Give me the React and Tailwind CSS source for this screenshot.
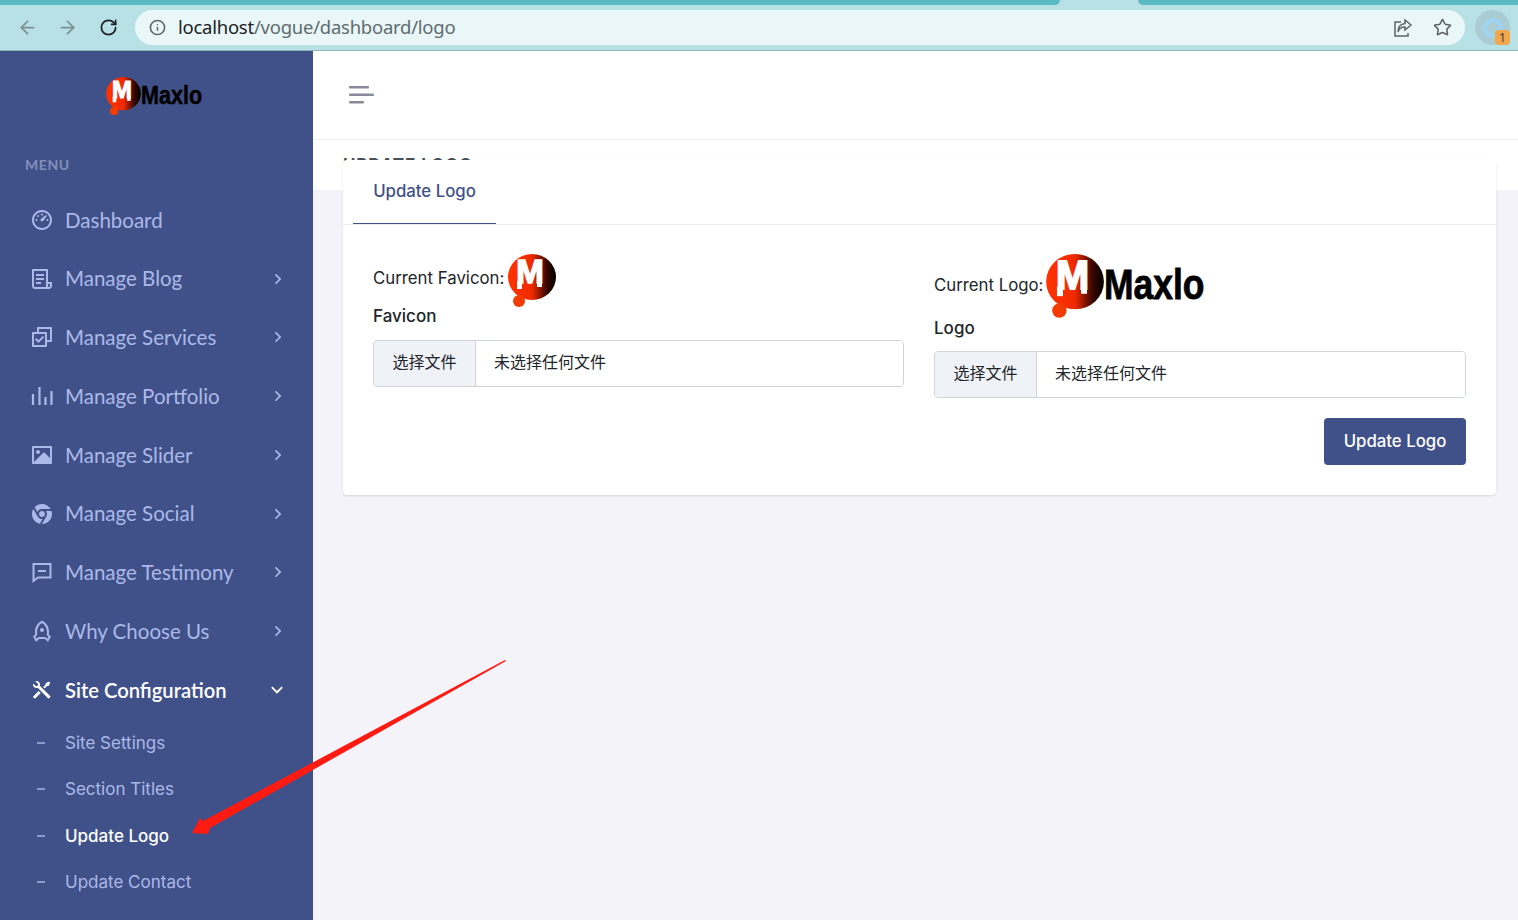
import { useId } from 'react';
import { ArrowLeft, ArrowRight, RotateCw, Info, Star } from 'lucide-react';
import {
  RiDashboard3Line,
  RiFileList3Line,
  RiCheckboxMultipleLine,
  RiImageFill,
  RiChromeFill,
  RiRocketLine,
  RiToolsFill,
  RiArrowRightSLine,
  RiArrowDownSLine,
} from 'react-icons/ri';

const BarsIcon = ({ className }) => (
  <svg viewBox="0 0 24 24" className={className} fill="none" stroke="currentColor" strokeWidth="2.2">
    <path d="M3 21V10M9.500 21V3M15.500 21V13M21.500 21V7" />
  </svg>
);

const BubbleIcon = ({ className }) => (
  <svg viewBox="0 0 24 24" className={className} fill="none" stroke="currentColor" strokeWidth="2">
    <path d="M3.500 4h17v13.500H8L3.500 21z" />
    <path d="M8 11h8" />
  </svg>
);

const menuItems = [
  { label: 'Dashboard', icon: RiDashboard3Line },
  { label: 'Manage Blog', icon: RiFileList3Line, arrow: true },
  { label: 'Manage Services', icon: RiCheckboxMultipleLine, arrow: true },
  { label: 'Manage Portfolio', icon: BarsIcon, arrow: true },
  { label: 'Manage Slider', icon: RiImageFill, arrow: true },
  { label: 'Manage Social', icon: RiChromeFill, arrow: true },
  { label: 'Manage Testimony', icon: BubbleIcon, arrow: true },
  { label: 'Why Choose Us', icon: RiRocketLine, arrow: true },
];

const subItems = ['Site Settings', 'Section Titles', 'Update Logo', 'Update Contact'];

const LogoMark = ({ className }) => {
  const id = useId();
  return (
    <svg viewBox="0 0 48 54" className={className}>
      <defs>
        <linearGradient id={id} x1="0" x2="1" y1="0" y2="0">
          <stop offset="0" stopColor="#ff3300" />
          <stop offset="0.5" stopColor="#f02a00" />
          <stop offset="0.8" stopColor="#3a0800" />
          <stop offset="1" stopColor="#000000" />
        </linearGradient>
      </defs>
      <ellipse cx="24" cy="23" rx="24" ry="23" fill={`url(#${id})`} />
      <circle cx="11" cy="47" r="6" fill="#f23c00" />
      <text x="22" y="29" textAnchor="middle" fontFamily="'Liberation Sans', sans-serif" fontWeight="700" fontSize="33" fill="#fff" stroke="#fff" strokeWidth="1.5">
        M
      </text>
      <rect x="9" y="27" width="5" height="8" fill="#fff" />
      <rect x="29" y="27" width="5" height="6" fill="#fff" />
    </svg>
  );
};

const BrowserBar = () => (
  <div className="shrink-0 h-[51px] bg-[#b7e1e5] border-b border-[#8fb5ba] flex flex-col">
    <div className="h-[5px] flex justify-between">
      <div className="w-[1060px] bg-[#5bb9c3] rounded-br-lg" />
      <div className="w-[380px] bg-[#5bb9c3] rounded-bl-lg" />
    </div>
    <div className="flex items-center mt-[5px] h-[35px]">
      <div className="w-[135px] flex items-center pl-[17px]">
        <ArrowLeft className="w-[21px] h-[21px] text-[#7d9094]" strokeWidth={2} />
        <ArrowRight className="w-[21px] h-[21px] ml-[19px] text-[#7d9094]" strokeWidth={2} />
        <RotateCw className="w-[19px] h-[19px] ml-[21px] text-[#202124]" strokeWidth={2.2} />
      </div>
      <div className="w-[1330px] h-[35px] rounded-full bg-[#e9f7f8] flex items-center pl-[14px] pr-[13px]">
        <Info className="w-[17px] h-[17px] text-[#5f6368]" strokeWidth={2.2} />
        <span className="ml-[12px] pb-[2px] text-[18.500px] font-['Noto_Sans',sans-serif] text-[#616b6e] tracking-[-0.25px]">
          <span className="text-[#202124]">localhost</span>/vogue/dashboard/logo
        </span>
        <div className="ml-auto flex items-center gap-[20px]">
          <svg viewBox="0 0 20 20" className="w-[20px] h-[20px] text-[#5f6368]" fill="none" stroke="currentColor" strokeWidth="1.5">
            <path d="M8 4H2v14h13v-3" />
            <path d="M12 2l6 5-6 5V9C8 9 6 10 5 14c0-5 3-8 7-8.500z" />
          </svg>
          <Star className="w-[19px] h-[19px] text-[#5f6368]" strokeWidth={2} />
        </div>
      </div>
      <div className="ml-[10px] relative w-[35px] h-[35px] rounded-full bg-[#a9cdd2] flex items-center justify-center">
        <div className="w-[20px] h-[20px] rounded-full border-[4px] border-[#9fd4f5]" />
        <div className="absolute right-0 bottom-0 w-[15px] h-[15px] bg-[#f2a74b] rounded-sm text-[12px] leading-[15px] text-center text-[#3b3b3b] font-['Noto_Sans',sans-serif]">
          1
        </div>
      </div>
    </div>
  </div>
);

const Sidebar = () => (
  <aside className="shrink-0 w-[313px] bg-[#405189] overflow-hidden">
    <div className="h-[88px] flex items-start pl-[106px] pt-[26px]">
      <LogoMark className="w-[35px] h-[39px]" />
      <span className="inline-block origin-left scale-x-[0.83] font-['Liberation_Sans',sans-serif] font-bold text-[26px] leading-[36px] text-black [-webkit-text-stroke:0.5px_black]">
        Maxlo
      </span>
    </div>
    <div className="pl-[25px] mt-[16px] h-[20px] text-[14px] leading-[20px] font-bold text-[#838fb9] font-['Lato',sans-serif] tracking-[0.6px]">
      MENU
    </div>
    <nav className="mt-[15.500px] font-['Lato',sans-serif]">
      {menuItems.map(({ label, icon: Icon, arrow }) => (
        <div key={label} className="h-[58.75px] flex items-center pl-[29.500px] pr-[25px] text-[#abb9e8] text-[20.500px]">
          <Icon className="w-[24px] h-[24px] shrink-0" />
          <span className="ml-[11.500px]">{label}</span>
          {arrow && <RiArrowRightSLine className="ml-auto w-[20px] h-[20px]" />}
        </div>
      ))}
      <div className="h-[58.75px] flex items-center pl-[29.500px] pr-[25px] text-white text-[20.200px] font-semibold">
        <RiToolsFill className="w-[24px] h-[24px] shrink-0" />
        <span className="ml-[11.500px]">Site Configuration</span>
        <RiArrowDownSLine className="ml-auto w-[22px] h-[22px]" />
      </div>
    </nav>
    <div className="mt-[1.500px] font-['Inter',sans-serif] text-[17px]">
      {subItems.map((item) => (
        <div key={item} className={`h-[46.33px] flex items-center pl-[37px] ${item === 'Update Logo' ? 'text-white font-medium' : 'text-[#abb9e8]'}`}>
          <span className="w-[8px] h-[2px] -mt-[2px] bg-[#8c9ac9]" />
          <span className="ml-[20px]">{item}</span>
        </div>
      ))}
    </div>
  </aside>
);

const FileField = () => (
  <div className="h-[47px] flex border border-[#ced4da] rounded-[4px] overflow-hidden text-[16px] text-[#212529] font-['Noto_Sans_CJK_SC',sans-serif]">
    <div className="w-[102px] pb-[5px] bg-[#eff2f7] border-r border-[#ced4da] flex items-center justify-center">选择文件</div>
    <div className="flex-1 pb-[5px] bg-white flex items-center pl-[18px]">未选择任何文件</div>
  </div>
);

export default function App() {
  return (
    <div className="relative h-[920px] w-full overflow-hidden flex flex-col font-['Inter',sans-serif] bg-[#f3f3f9]">
      <BrowserBar />
      <div className="flex-1 flex min-h-0">
        <Sidebar />
        <main className="flex-1 min-w-0">
          <header className="h-[89px] bg-white border-b border-[#f0f0f5] flex items-center pl-[36px]">
            <svg viewBox="0 0 25 18" className="w-[25px] h-[18px]">
              <rect x="0" y="0" width="20" height="2.500" rx="1" fill="#878a99" />
              <rect x="0" y="7.500" width="25" height="2.500" rx="1" fill="#878a99" />
              <rect x="0" y="15" width="15" height="2.500" rx="1" fill="#878a99" />
            </svg>
          </header>
          <div className="h-[50px] bg-white pl-[30px] pt-[13px] text-[17px] leading-[24px] font-bold text-[#495057] tracking-[0.9px]">
            UPDATE LOGO
          </div>
          <section className="relative -mt-[30px] ml-[30px] mr-[22px] bg-white rounded-[4px] shadow-[0_1px_2px_rgba(56,65,74,0.15)]">
            <div className="h-[65px] border-b border-[#e9ebec] pl-[10px]">
              <div className="w-[143px] h-[64px] border-b border-[#405189] flex items-center justify-center text-[#405189] text-[16.800px] font-medium">
                Update Logo
              </div>
            </div>
            <div className="px-[30px] pt-[29px] pb-[30px]">
              <div className="grid grid-cols-[531px_532px] gap-x-[30px]">
                <div>
                  <div className="h-[52px] flex items-start text-[16.800px] text-[#212529]">
                    <span className="mt-[12px] mr-[4px]">Current Favicon:</span>
                    <LogoMark className="w-[48px] h-[54px]" />
                  </div>
                  <div className="h-[34px] text-[17px] leading-[20px] font-medium text-[#212529]">Favicon</div>
                  <FileField />
                </div>
                <div>
                  <div className="h-[63px] flex items-start text-[16.800px] text-[#212529]">
                    <span className="mt-[19px] mr-[3px]">Current Logo:</span>
                    <LogoMark className="w-[58px] h-[65px]" />
                    <span className="inline-block origin-left scale-x-[0.825] mt-[4px] font-['Liberation_Sans',sans-serif] font-bold text-[43px] leading-[52px] text-black [-webkit-text-stroke:0.8px_black]">
                      Maxlo
                    </span>
                  </div>
                  <div className="h-[34px] pt-[1px] text-[17px] leading-[20px] font-medium text-[#212529]">Logo</div>
                  <FileField />
                  <div className="mt-[20px] flex justify-end">
                    <button className="w-[142px] h-[47px] bg-[#405189] rounded-[4px] text-white text-[16.800px] font-medium">
                      Update Logo
                    </button>
                  </div>
                </div>
              </div>
            </div>
          </section>
        </main>
      </div>
      {/* annotation arrow */}
      <svg viewBox="0 0 320 180" className="absolute left-[190px] top-[658px] w-[320px] h-[180px] pointer-events-none">
        <polygon points="315,2 316,3 20,170 18,176 2,175 10,160 13,163" fill="#ff1a12" />
      </svg>
    </div>
  );
}
